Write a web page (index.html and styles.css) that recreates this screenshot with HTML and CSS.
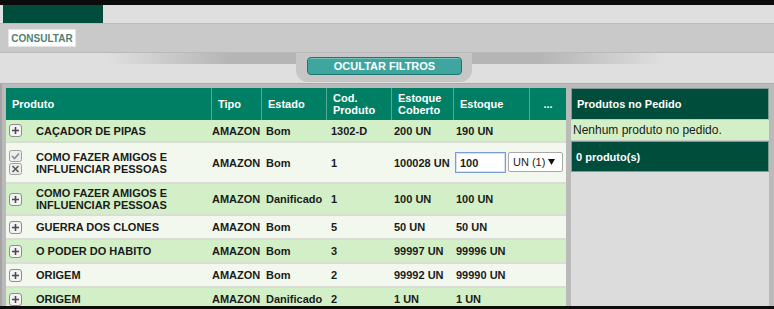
FILE: index.html
```html
<!DOCTYPE html>
<html lang="pt-BR">
<head>
  <meta charset="UTF-8">
  <meta name="viewport" content="width=device-width, initial-scale=1.0">
  <title>Pedido - Produtos</title>
  <link rel="stylesheet" href="styles.css">
</head>
<body>
  <div class="page">
    <div class="topbar"></div>
    <div class="tabs"><div class="tab-active"></div></div>

    <div class="toolbar">
      <button class="btn-consultar">CONSULTAR</button>
    </div>

    <div class="filterbar">
      <div class="filter-tab">
        <button class="btn-filtros">OCULTAR FILTROS</button>
      </div>
    </div>

    <div class="main">
      <div class="grid">
        <div class="row head">
          <div class="cell">Produto</div>
          <div class="cell">Tipo</div>
          <div class="cell">Estado</div>
          <div class="cell">Cod.<br>Produto</div>
          <div class="cell">Estoque<br>Coberto</div>
          <div class="cell">Estoque</div>
          <div class="cell more">...</div>
        </div>

        <div class="row green">
          <div class="cell prod">
            <svg class="ico" width="13" height="13" viewBox="0 0 13 13"><rect x="0.5" y="0.5" width="12" height="12" rx="2.5" fill="#f3f3f3" stroke="#8e8e8e"/><path d="M3 6.5h7M6.5 3v7" stroke="#4a4a4a" stroke-width="1.6"/></svg>
            <span>CAÇADOR DE PIPAS</span>
          </div>
          <div class="cell">AMAZON</div>
          <div class="cell">Bom</div>
          <div class="cell">1302-D</div>
          <div class="cell">200 UN</div>
          <div class="cell">190 UN</div>
          <div class="cell"></div>
        </div>

        <div class="row light editing">
          <div class="cell prod">
            <span class="ico-stack">
              <svg class="ico" width="13" height="12" viewBox="0 0 13 12"><rect x="0.5" y="0.5" width="12" height="11" rx="2" fill="#ececec" stroke="#a0a0a0"/><path d="M3 6l2.5 2.5L10 3.5" fill="none" stroke="#8a8a8a" stroke-width="1.6"/></svg>
              <svg class="ico" width="13" height="12" viewBox="0 0 13 12"><rect x="0.5" y="0.5" width="12" height="11" rx="2" fill="#ececec" stroke="#a0a0a0"/><path d="M3.5 3l6 6M9.5 3l-6 6" stroke="#555" stroke-width="1.5"/></svg>
            </span>
            <span>COMO FAZER AMIGOS E<br>INFLUENCIAR PESSOAS</span>
          </div>
          <div class="cell">AMAZON</div>
          <div class="cell">Bom</div>
          <div class="cell">1</div>
          <div class="cell">100028 UN</div>
          <div class="cell qty-cell">
            <input class="qty" type="text" value="100">
            <select class="unit"><option>UN (1)</option></select>
          </div>
        </div>

        <div class="row green">
          <div class="cell prod">
            <svg class="ico" width="13" height="13" viewBox="0 0 13 13"><rect x="0.5" y="0.5" width="12" height="12" rx="2.5" fill="#f3f3f3" stroke="#8e8e8e"/><path d="M3 6.5h7M6.5 3v7" stroke="#4a4a4a" stroke-width="1.6"/></svg>
            <span>COMO FAZER AMIGOS E<br>INFLUENCIAR PESSOAS</span>
          </div>
          <div class="cell">AMAZON</div>
          <div class="cell">Danificado</div>
          <div class="cell">1</div>
          <div class="cell">100 UN</div>
          <div class="cell">100 UN</div>
          <div class="cell"></div>
        </div>

        <div class="row light">
          <div class="cell prod">
            <svg class="ico" width="13" height="13" viewBox="0 0 13 13"><rect x="0.5" y="0.5" width="12" height="12" rx="2.5" fill="#f3f3f3" stroke="#8e8e8e"/><path d="M3 6.5h7M6.5 3v7" stroke="#4a4a4a" stroke-width="1.6"/></svg>
            <span>GUERRA DOS CLONES</span>
          </div>
          <div class="cell">AMAZON</div>
          <div class="cell">Bom</div>
          <div class="cell">5</div>
          <div class="cell">50 UN</div>
          <div class="cell">50 UN</div>
          <div class="cell"></div>
        </div>

        <div class="row green">
          <div class="cell prod">
            <svg class="ico" width="13" height="13" viewBox="0 0 13 13"><rect x="0.5" y="0.5" width="12" height="12" rx="2.5" fill="#f3f3f3" stroke="#8e8e8e"/><path d="M3 6.5h7M6.5 3v7" stroke="#4a4a4a" stroke-width="1.6"/></svg>
            <span>O PODER DO HABITO</span>
          </div>
          <div class="cell">AMAZON</div>
          <div class="cell">Bom</div>
          <div class="cell">3</div>
          <div class="cell">99997 UN</div>
          <div class="cell">99996 UN</div>
          <div class="cell"></div>
        </div>

        <div class="row light">
          <div class="cell prod">
            <svg class="ico" width="13" height="13" viewBox="0 0 13 13"><rect x="0.5" y="0.5" width="12" height="12" rx="2.5" fill="#f3f3f3" stroke="#8e8e8e"/><path d="M3 6.5h7M6.5 3v7" stroke="#4a4a4a" stroke-width="1.6"/></svg>
            <span>ORIGEM</span>
          </div>
          <div class="cell">AMAZON</div>
          <div class="cell">Bom</div>
          <div class="cell">2</div>
          <div class="cell">99992 UN</div>
          <div class="cell">99990 UN</div>
          <div class="cell"></div>
        </div>

        <div class="row green">
          <div class="cell prod">
            <svg class="ico" width="13" height="13" viewBox="0 0 13 13"><rect x="0.5" y="0.5" width="12" height="12" rx="2.5" fill="#f3f3f3" stroke="#8e8e8e"/><path d="M3 6.5h7M6.5 3v7" stroke="#4a4a4a" stroke-width="1.6"/></svg>
            <span>ORIGEM</span>
          </div>
          <div class="cell">AMAZON</div>
          <div class="cell">Danificado</div>
          <div class="cell">2</div>
          <div class="cell">1 UN</div>
          <div class="cell">1 UN</div>
          <div class="cell"></div>
        </div>
      </div>

      <div class="pedido">
        <div class="pedido-head">Produtos no Pedido</div>
        <div class="pedido-empty">Nenhum produto no pedido.</div>
        <div class="pedido-total">0 produto(s)</div>
      </div>
    </div>
  </div>
</body>
</html>
```

FILE: styles.css
```css
* {
  box-sizing: border-box;
}

body {
  margin: 0;
  background-color: #dedede;
  font-family: "Liberation Sans", Arial, sans-serif;
  font-size: 11px;
  color: #1b1b1b;
}

.page {
  height: 309px;
  overflow: hidden;
  display: flex;
  flex-direction: column;
  border-bottom: 3px solid #0d0d0d;
}

.topbar {
  flex: none;
  height: 5px;
  background-color: #0b0b0b;
}

.tabs {
  flex: none;
  height: 19px;
  padding-left: 3px;
  background-color: #dfdfdf;
  border-bottom: 1px solid #bcbcbc;
}

.tab-active {
  width: 100px;
  height: 18px;
  background-color: #004d3b;
}

.toolbar {
  flex: none;
  height: 29px;
  padding: 5px 0 0 8px;
  background-color: #c9c9c9;
  border-bottom: 1px solid #b9b9b9;
}

.btn-consultar {
  display: block;
  width: 68px;
  height: 18px;
  padding: 0;
  background-color: #fff;
  border: 1px solid #e4e4e4;
  color: #557f70;
  font-family: inherit;
  font-size: 10px;
  font-weight: bold;
}

.filterbar {
  flex: none;
  height: 31px;
  background-color: #dfdfdf;
  background-image: linear-gradient(to right, rgba(170, 170, 170, 0) 108px, #b5b5b5 230px, #b5b5b5 540px, rgba(170, 170, 170, 0) 665px);
  background-size: 100% 11px;
  background-repeat: no-repeat;
  border-bottom: 1px solid #acacac;
}

.filter-tab {
  width: 176px;
  height: 29px;
  margin-left: 296px;
  padding: 4px 0 0 11px;
  background-color: #c6c6c6;
  border-radius: 0 0 12px 12px;
}

.btn-filtros {
  display: block;
  width: 155px;
  height: 18px;
  padding: 0;
  background-color: #3ea69e;
  border: 1px solid #1d766c;
  border-radius: 4px;
  box-shadow: inset 0 1px 0 rgba(255, 255, 255, 0.3);
  color: #fff;
  font-family: inherit;
  font-size: 11px;
  font-weight: bold;
}

.main {
  flex: 1;
  min-height: 0;
  display: flex;
  gap: 5px;
  padding: 4px 5px 0 4px;
  background-color: #bababa;
  border-left: 2px solid #a4a4a4;
}

.grid {
  width: 560px;
  flex: none;
}

.row {
  display: grid;
  grid-template-columns: 202px 54px 65px 63px 62px 77px 37px;
  align-items: center;
  min-height: 24px;
  border-bottom: 2px solid #d9ddd6;
  font-weight: bold;
  line-height: 12px;
}

.row .cell {
  padding: 3px 0 3px 4px;
  white-space: nowrap;
}

.row.head {
  grid-template-columns: 205px 50px 65px 65px 62px 76px 37px;
  align-items: stretch;
  height: 32px;
  background-color: #007f65;
  color: #fff;
  border-bottom: 0;
}

.row.head .cell {
  display: flex;
  align-items: center;
  padding: 0 0 0 6px;
  border-left: 1px solid #55a795;
}

.row.head .cell:first-child {
  border-left: 0;
}

.row.head .more {
  justify-content: center;
  padding: 0;
}

.green {
  background-color: #d3efc7;
}

.light {
  background-color: #f2f8ee;
}

.row.green:nth-child(2) {
  min-height: 23px;
}

.editing {
  min-height: 41px;
}

.cell.prod {
  display: flex;
  align-items: center;
  gap: 14px;
  padding-left: 3px;
}

.ico {
  display: block;
  flex: none;
}

.ico-stack {
  display: flex;
  flex-direction: column;
  gap: 1px;
}

.qty-cell {
  grid-column: span 2;
  display: flex;
  gap: 2px;
}

.row .qty-cell {
  padding-left: 3px;
}

.qty {
  width: 51px;
  height: 21px;
  margin: 0;
  padding: 0 4px;
  border: 1px solid #7a9dd6;
  box-shadow: inset 0 0 0 1px #d4e0f4;
  background-color: #fff;
  font-family: inherit;
  font-size: 11px;
  font-weight: bold;
  color: #1b1b1b;
}

.unit {
  appearance: none;
  -webkit-appearance: none;
  width: 55px;
  height: 20px;
  margin: 0;
  padding: 0 0 0 4px;
  border: 1px solid #a9a9a9;
  border-radius: 2px;
  background-color: #fff;
  background-image: url("data:image/svg+xml,%3Csvg xmlns='http://www.w3.org/2000/svg' width='7' height='6' viewBox='0 0 7 6'%3E%3Cpath fill='%23111111' d='M0 0h7L3.5 6z'/%3E%3C/svg%3E");
  background-repeat: no-repeat;
  background-position: right 7px top 50%;
  font-family: inherit;
  font-size: 11px;
  color: #222;
}

.pedido {
  width: 198px;
  flex: none;
  background-color: #dcdcdc;
}

.pedido-head {
  height: 32px;
  padding-left: 5px;
  display: flex;
  align-items: center;
  background-color: #004d3b;
  border: 1px solid #7d9c92;
  border-bottom-color: #c8c8c8;
  color: #fff;
  font-weight: bold;
}

.pedido-empty {
  height: 21px;
  padding-left: 2px;
  display: flex;
  align-items: center;
  background-color: #d3efc7;
  border-bottom: 1px solid #c8c8c8;
  font-size: 12px;
}

.pedido-total {
  height: 31px;
  padding-left: 4px;
  display: flex;
  align-items: center;
  background-color: #004d3b;
  border: 1px solid #7d9c92;
  color: #fff;
  font-weight: bold;
}
```
